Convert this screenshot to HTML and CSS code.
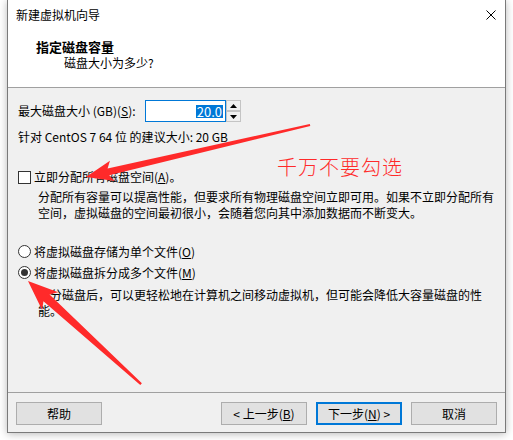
FILE: index.html
```html
<!DOCTYPE html>
<html lang="zh-CN">
<head>
<meta charset="utf-8">
<title>新建虚拟机向导</title>
<link rel="stylesheet" href="styles.css">
</head>
<body>
<div class="dialog">
  <div class="titlebar">
    <span class="title">新建虚拟机向导</span>
    <svg class="close" width="10" height="10" viewBox="0 0 10 10">
      <path d="M0.5 0.5 L9.5 9.5 M9.5 0.5 L0.5 9.5" stroke="#000" stroke-width="1" fill="none"/>
    </svg>
  </div>
  <div class="header">
    <div class="header-title">指定磁盘容量</div>
    <div class="header-sub">磁盘大小为多少?</div>
  </div>
  <div class="content">
    <div class="size-row">
      <label class="size-label">最大磁盘大小 (GB)(<u>S</u>):</label>
      <div class="spin">
        <div class="spin-field"><span class="sel">20.0</span></div>
        <div class="spin-btns">
          <div class="spin-btn"><svg width="7" height="4" viewBox="0 0 7 4"><path d="M0 4 L3.5 0 L7 4 Z" fill="#000"/></svg></div>
          <div class="spin-btn"><svg width="7" height="4" viewBox="0 0 7 4"><path d="M0 0 L3.5 4 L7 0 Z" fill="#000"/></svg></div>
        </div>
      </div>
    </div>
    <div class="hint">针对 CentOS 7 64 位 的建议大小: 20 GB</div>

    <div class="option check-row">
      <span class="checkbox"></span>
      <span>立即分配所有磁盘空间(<u>A</u>)。</span>
    </div>
    <p class="desc">分配所有容量可以提高性能，但要求所有物理磁盘空间立即可用。如果不立即分配所有空间，虚拟磁盘的空间最初很小，会随着您向其中添加数据而不断变大。</p>

    <div class="option radio-row first">
      <span class="radio"></span>
      <span>将虚拟磁盘存储为单个文件(<u>O</u>)</span>
    </div>
    <div class="option radio-row">
      <span class="radio on"></span>
      <span>将虚拟磁盘拆分成多个文件(<u>M</u>)</span>
    </div>
    <p class="desc">拆分磁盘后，可以更轻松地在计算机之间移动虚拟机，但可能会降低大容量磁盘的性能。</p>
  </div>
  <div class="footer">
    <button class="btn help">帮助</button>
    <button class="btn">&lt; 上一步(<u>B</u>)</button>
    <button class="btn default">下一步(<u>N</u>) &gt;</button>
    <button class="btn">取消</button>
  </div>
</div>

<div class="note">千万不要勾选</div>
<svg class="marks" width="513" height="440" viewBox="0 0 513 440">
  <polygon transform="translate(86 177) rotate(-13.07)" points="0,0 27,-10.5 23,-3.5 230,-1 230,1 23,3.5 27,10.5" fill="#ff2a2a"/>
  <polygon transform="translate(28 281) rotate(42.35)" points="0,0 30,-12 25,-4.5 153,-1.2 153,1.2 25,4.5 30,12" fill="#ff2a2a"/>
</svg>
</body>
</html>
```
FILE: styles.css
```css
* {
  box-sizing: border-box;
}

html,
body {
  margin: 0;
  padding: 0;
}

body {
  position: relative;
  width: 513px;
  height: 440px;
  overflow: hidden;
  background: #fff;
  font-family: "Noto Sans CJK SC", "Microsoft YaHei", sans-serif;
  font-size: 12px;
  color: #000;
}

u {
  text-decoration: underline;
  text-underline-offset: 1px;
}

/* window frame */
.dialog {
  display: flex;
  flex-direction: column;
  margin-left: 7px;
  width: 499px;
  height: 433px;
  background: #f0f0f0;
  border: 1px solid #7a7a7a;
  border-top: none;
  box-shadow: 0 1px 8px rgba(0, 0, 0, 0.28);
}

.titlebar {
  display: flex;
  align-items: center;
  justify-content: space-between;
  height: 30px;
  padding: 0 9px 0 8px;
  background: #fff;
}

.title {
  line-height: 16px;
}

.close {
  display: block;
}

/* wizard page header */
.header {
  height: 58px;
  padding: 9px 0 0 28px;
  background: #fff;
  border-bottom: 1px solid #a0a0a0;
}

.header-title {
  font-size: 13px;
  font-weight: bold;
  line-height: 16px;
}

.header-sub {
  padding-left: 28px;
  line-height: 16px;
}

/* page body */
.content {
  flex: 1;
  padding: 12px 9px 0 10px;
}

.size-row {
  display: flex;
  align-items: center;
  height: 22px;
}

.size-label {
  flex: 0 0 127px;
  line-height: 16px;
}

.spin {
  display: flex;
  height: 22px;
}

.spin-field {
  width: 81px;
  height: 22px;
  padding-right: 2px;
  display: flex;
  align-items: center;
  justify-content: flex-end;
  background: #fff;
  border: 1px solid #0078d7;
}

.sel {
  padding: 0 1px;
  font-size: 13px;
  line-height: 13px;
  background: #0078d7;
  color: #fff;
}

.spin-btns {
  display: flex;
  flex-direction: column;
  width: 15px;
}

.spin-btn {
  display: flex;
  align-items: center;
  justify-content: center;
  height: 11px;
  background: #f0f0f0;
  border: 1px solid #c4c4c4;
}

.spin-btn svg {
  display: block;
}

.hint {
  margin-top: 7px;
  line-height: 16px;
}

.option {
  display: flex;
  align-items: center;
  gap: 3px;
  line-height: 16px;
}

.check-row {
  margin-top: 24px;
  height: 16px;
}

.checkbox {
  flex: 0 0 13px;
  width: 13px;
  height: 13px;
  background: #fff;
  border: 1px solid #333;
}

.desc {
  margin: 4px 0 0 20px;
  line-height: 16px;
}

.radio-row {
  height: 21px;
}

.radio-row.first {
  margin-top: 20px;
}

.radio {
  position: relative;
  flex: 0 0 13px;
  width: 13px;
  height: 13px;
  border-radius: 50%;
  background: #fff;
  border: 1px solid #333;
}

.radio.on::after {
  content: "";
  position: absolute;
  left: 2px;
  top: 2px;
  width: 7px;
  height: 7px;
  border-radius: 50%;
  background: #333;
}

/* button strip */
.footer {
  display: flex;
  gap: 9px;
  height: 40px;
  padding: 9px 8px 7px;
  border-top: 1px solid #a0a0a0;
}

.btn {
  width: 86px;
  height: 23px;
  padding: 0;
  font-family: inherit;
  font-size: 12px;
  line-height: 21px;
  color: #000;
  background: #e1e1e1;
  border: 1px solid #adadad;
}

.btn.help {
  margin-right: auto;
}

.btn.default {
  border: 2px solid #0078d7;
  line-height: 19px;
}

/* red annotation */
.note {
  position: absolute;
  left: 277px;
  top: 157px;
  font-size: 20px;
  font-weight: 300;
  line-height: 20px;
  letter-spacing: 1px;
  color: #ff2a2a;
}

.marks {
  position: absolute;
  left: 0;
  top: 0;
  pointer-events: none;
}
```
